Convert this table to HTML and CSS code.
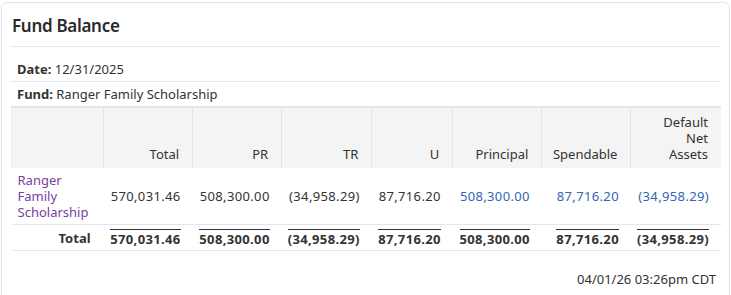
FILE: index.html
```html
<!DOCTYPE html>
<html>
<head>
<meta charset="utf-8">
<link rel="stylesheet" href="styles.css">
</head>
<body>
<div class="card">
  <h2 class="card-title">Fund Balance</h2>
  <div class="info info-date"><b>Date:</b> 12/31/2025</div>
  <div class="info info-fund"><b>Fund:</b> Ranger Family Scholarship</div>
  <table class="report">
    <colgroup>
      <col class="c-name"><col class="c-w89"><col class="c-w89"><col class="c-w90"><col class="c-w81"><col class="c-w89"><col class="c-w89"><col class="c-w90">
    </colgroup>
    <thead>
      <tr>
        <th></th><th>Total</th><th>PR</th><th>TR</th><th>U</th><th>Principal</th><th>Spendable</th><th>Default<br>Net<br>Assets</th>
      </tr>
    </thead>
    <tbody>
      <tr class="data">
        <td class="name"><a href="#">Ranger<br>Family<br>Scholarship</a></td>
        <td class="num">570,031.46</td><td class="num">508,300.00</td><td class="num">(34,958.29)</td><td class="num">87,716.20</td>
        <td class="num blue">508,300.00</td><td class="num blue">87,716.20</td><td class="num blue">(34,958.29)</td>
      </tr>
      <tr class="total">
        <td>Total</td>
        <td class="num"><span class="ol">570,031.46</span></td><td class="num"><span class="ol">508,300.00</span></td><td class="num"><span class="ol">(34,958.29)</span></td><td class="num"><span class="ol">87,716.20</span></td>
        <td class="num"><span class="ol">508,300.00</span></td><td class="num"><span class="ol">87,716.20</span></td><td class="num"><span class="ol">(34,958.29)</span></td>
      </tr>
    </tbody>
  </table>
  <div class="footer">04/01/26 03:26pm CDT</div>
</div>
</body>
</html>
```
FILE: styles.css
```css
html, body {
  margin: 0;
  padding: 0;
  background: #fff;
}
body {
  font-family: "Noto Sans", "Open Sans", sans-serif;
  font-size: 13px;
  color: #333;
  overflow: hidden;
}
.card {
  margin: 2px 1px 0 1px;
  border: 1px solid #dfe4ea;
  border-radius: 6px;
  padding: 0 9px 40px 9px;
}
.card-title {
  margin: 0;
  font-size: 17px;
  font-weight: 600;
  line-height: 22px;
  color: #2a2a2a;
  padding: 12px 1px 9px;
  border-bottom: 1px solid #e2e7ee;
  letter-spacing: -0.3px;
}
.info {
  padding: 0 6px;
  line-height: 16px;
  border-bottom: 1px solid #e2e7ee;
}
.info-date {
  padding-top: 14px;
  padding-bottom: 4px;
}
.info-fund {
  padding-top: 4px;
  padding-bottom: 4px;
  border-bottom: none;
}
.info b { font-weight: 700; }
.report {
  width: 710px;
  border-collapse: collapse;
  table-layout: fixed;
  border-top: 2px solid #e3e6ea;
}
.c-name { width: 92px; }
.c-w89 { width: 89px; }
.c-w90 { width: 90px; }
.c-w81 { width: 81px; }
.report th {
  background: #f4f4f4;
  font-weight: 400;
  text-align: right;
  vertical-align: bottom;
  line-height: 16px;
  padding: 6px 13px 6px 6px;
  border-left: 1px solid #e4e4e4;
}
.report th:first-child { border-left: 1px solid #eceef0; }
.report td {
  text-align: right;
  line-height: 16px;
  padding: 4px 12px 4px 6px;
  white-space: nowrap;
}
.report td.num { letter-spacing: 0.35px; }
.report tr.data td {
  border-bottom: 1px solid #e2e7ee;
}
.report td.name {
  text-align: left;
  white-space: normal;
}
.report td.name a {
  color: #7a3ea3;
  text-decoration: none;
}
.report td.blue { color: #3366b3; }
.report tr.total td {
  font-weight: 700;
  border-bottom: 1px solid #e2e7ee;
  padding-top: 4px;
  padding-bottom: 3px;
}
.report tr.total td:first-child { padding-right: 13px; }
.ol {
  display: inline-block;
  border-top: 1px solid #333;
  padding-top: 1px;
}
.footer {
  text-align: right;
  padding: 20px 4px 0 0;
  line-height: 16px;
}
```
